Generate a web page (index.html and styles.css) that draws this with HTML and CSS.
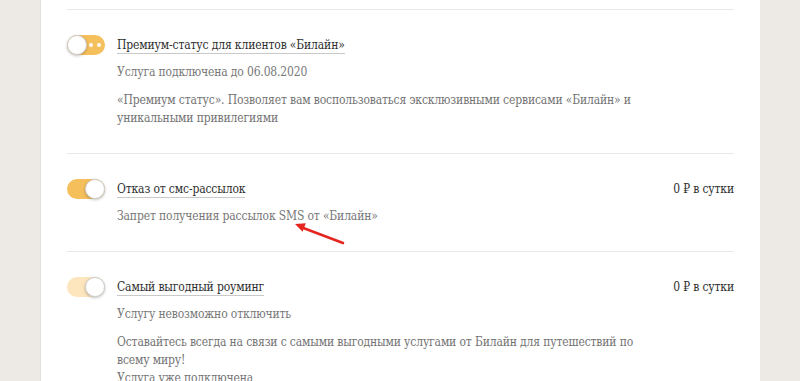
FILE: index.html
```html
<!DOCTYPE html>
<html lang="ru">
<head>
    <meta charset="UTF-8">
    <title>Услуги - Билайн</title>
    <link rel="stylesheet" href="styles.css">
</head>
<body>
    <div class="panel">
        <div class="services">
            <div class="service">
                <div class="switch loading"><span class="knob"></span></div>
                <div class="info">
                    <div class="head">
                        <span class="title">Премиум-статус для клиентов «Билайн»</span>
                    </div>
                    <p class="status">Услуга подключена до 06.08.2020</p>
                    <p class="desc">«Премиум статус». Позволяет вам воспользоваться эксклюзивными сервисами «Билайн» и уникальными привилегиями</p>
                </div>
            </div>

            <div class="service">
                <div class="switch on"><span class="knob"></span></div>
                <div class="info">
                    <div class="head">
                        <span class="title">Отказ от смс-рассылок</span>
                        <span class="price">0 ₽ в сутки</span>
                    </div>
                    <p class="status">Запрет получения рассылок SMS от «Билайн»</p>
                </div>
            </div>

            <div class="service">
                <div class="switch on locked"><span class="knob"></span></div>
                <div class="info">
                    <div class="head">
                        <span class="title">Самый выгодный роуминг</span>
                        <span class="price">0 ₽ в сутки</span>
                    </div>
                    <p class="status">Услугу невозможно отключить</p>
                    <p class="desc">Оставайтесь всегда на связи с самыми выгодными услугами от Билайн для путешествий по всему миру!<br>Услуга уже подключена</p>
                </div>
            </div>
        </div>
    </div>

    <!-- red pointer drawn over the screenshot -->
    <svg class="pointer" width="60" height="30" viewBox="0 0 60 30">
        <line x1="53" y1="25" x2="12" y2="9.5" stroke="#e5251f" stroke-width="2.5" stroke-linecap="round"/>
        <polygon points="5,6 15.8,5.2 12.6,13.8" fill="#e5251f"/>
    </svg>
</body>
</html>
```

FILE: styles.css
```css
body {
    margin: 0;
    background-color: #edeae6;
    font-family: "DejaVu Serif Condensed", "Liberation Serif", serif;
    font-size: 12px;
    letter-spacing: -0.15px;
    color: #333;
    position: relative;
    height: 381px;
    overflow: hidden;
}

.panel {
    margin-left: 40px;
    width: 720px;
    min-height: 381px;
    background-color: #ffffff;
    border-left: 1px solid #e2dfdb;
    padding: 9px 26px 0 26px;
    box-sizing: border-box;
}

.service {
    display: flex;
    align-items: flex-start;
    gap: 12px;
    border-top: 1px solid #e8e8e8;
    padding: 27px 0 26px 0;
}

.switch {
    position: relative;
    flex: none;
    width: 38px;
    height: 20px;
    margin-top: -2px;
    border-radius: 10px;
    background-color: #f5bf5c;
}

.switch .knob {
    position: absolute;
    top: 0;
    left: 0;
    width: 20px;
    height: 20px;
    box-sizing: border-box;
    border-radius: 50%;
    background-color: #fff;
    border: 1px solid #d0d0d0;
    box-shadow: 0 1px 3px rgba(0, 0, 0, 0.25);
}

.switch.on .knob {
    left: 18px;
}

.switch.locked {
    background-color: #fde6bd;
}

.switch.loading::before,
.switch.loading::after {
    content: "";
    position: absolute;
    top: 8px;
    width: 4px;
    height: 4px;
    border-radius: 50%;
    background-color: #fff;
}

.switch.loading::before {
    left: 22px;
}

.switch.loading::after {
    left: 30px;
}

.info {
    flex: 1;
}

.head {
    display: flex;
    justify-content: space-between;
    align-items: flex-start;
}

.title {
    line-height: 16px;
    color: #2f2f2f;
    border-bottom: 1px solid #c9c9c9;
}

.price {
    line-height: 16px;
    color: #2f2f2f;
}

.status {
    margin: 9px 0 0 0;
    line-height: 18px;
    color: #777;
}

.desc {
    margin: 10px 0 0 0;
    max-width: 530px;
    line-height: 18px;
    color: #737373;
}

.pointer {
    position: absolute;
    left: 290px;
    top: 218px;
}
```
